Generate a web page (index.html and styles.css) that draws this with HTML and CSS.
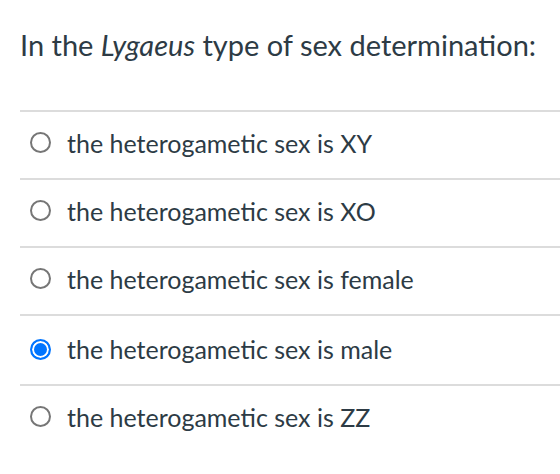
FILE: index.html
```html
<!DOCTYPE html>
<html lang="en">
<head>
  <meta charset="UTF-8">
  <title>Question</title>
  <meta name="viewport" content="width=device-width, initial-scale=1.0">
  <link rel="stylesheet" href="styles.css">
</head>
<body>
  <div class="question">
    <div class="question-text">
      In the <em>Lygaeus</em> type of sex determination:
    </div>

    <div class="answers">
      <label class="answer">
        <input type="radio" name="answer">
        <span>the heterogametic sex is XY</span>
      </label>
      <label class="answer">
        <input type="radio" name="answer">
        <span>the heterogametic sex is XO</span>
      </label>
      <label class="answer">
        <input type="radio" name="answer">
        <span>the heterogametic sex is female</span>
      </label>
      <label class="answer answer-tall">
        <input type="radio" name="answer" checked>
        <span>the heterogametic sex is male</span>
      </label>
      <label class="answer">
        <input type="radio" name="answer">
        <span>the heterogametic sex is ZZ</span>
      </label>
    </div>
  </div>
</body>
</html>
```

FILE: styles.css
```css
body {
  font-family: Lato, 'Open Sans', sans-serif;
  margin: 0;
  padding: 0;
  background-color: #ffffff;
  color: #2d3b45;
}

.question {
  padding: 0 0 0 20px;
}

.question-text {
  font-size: 29px;
  line-height: 1.2;
  padding: 28px 0 0;
  height: 110px;
  box-sizing: border-box;
}

.answers {
  display: flex;
  flex-direction: column;
}

.answer {
  display: flex;
  align-items: center;
  gap: 16px;
  height: 68px;
  padding: 0 0 5px 10px;
  border-top: 2px solid #dcdcdc;
  box-sizing: border-box;
  font-size: 25px;
}

.answer-tall {
  height: 70px;
  padding-bottom: 2px;
}

.answer input {
  appearance: none;
  -webkit-appearance: none;
  flex: none;
  width: 21px;
  height: 21px;
  margin: 0;
  border: 2px solid #767676;
  border-radius: 50%;
  box-sizing: border-box;
  background-color: #fff;
}

.answer input:checked {
  border-color: #0075ff;
  background-color: #0075ff;
  box-shadow: inset 0 0 0 2px #fff;
}
```
